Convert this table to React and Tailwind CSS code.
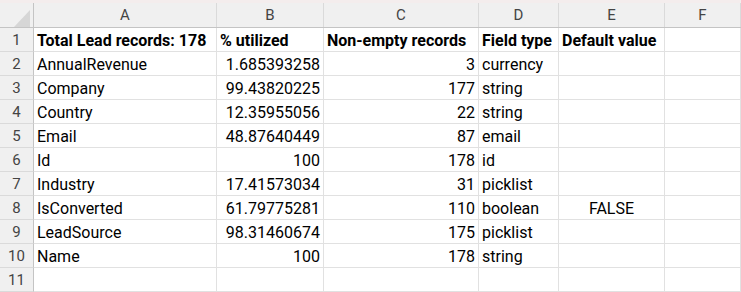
const cols = ["A", "B", "C", "D", "E", "F"]

const rows = [
  ["Total Lead records: 178", "% utilized", "Non-empty records", "Field type", "Default value", ""],
  ["AnnualRevenue", "1.685393258", "3", "currency", "", ""],
  ["Company", "99.43820225", "177", "string", "", ""],
  ["Country", "12.35955056", "22", "string", "", ""],
  ["Email", "48.87640449", "87", "email", "", ""],
  ["Id", "100", "178", "id", "", ""],
  ["Industry", "17.41573034", "31", "picklist", "", ""],
  ["IsConverted", "61.79775281", "110", "boolean", "FALSE", ""],
  ["LeadSource", "98.31460674", "175", "picklist", "", ""],
  ["Name", "100", "178", "string", "", ""],
  ["", "", "", "", "", ""],
]

const grid = "grid grid-cols-[34px_183px_107px_155px_80px_106px_1fr]"

function Cell({ value, col, header }) {
  let align = "justify-start pl-[3px]"
  if (!header && (col === 1 || col === 2)) align = "justify-end pr-[3px]"
  if (!header && value === "FALSE") align = "justify-center"
  return (
    <div
      className={`flex items-center ${align} h-[24px] pt-[2px] border-r border-b border-[#e1e1e1] whitespace-nowrap overflow-hidden ${
        header ? "font-bold" : ""
      }`}
    >
      {value}
    </div>
  )
}

export default function App() {
  return (
    <div
      className="w-[741px] h-[292px] overflow-hidden bg-white text-[16px] text-black"
      style={{ fontFamily: "Roboto, 'Liberation Sans', sans-serif" }}
    >
      <div className="h-[3px] bg-[#f4eded]" />
      {/* column headers */}
      <div className={`${grid} h-[25px] bg-[#f0f0f0] border-b border-[#c4c4c4] text-[#444] text-[15px]`}>
        <div className="relative border-r border-[#c4c4c4]">
          <svg className="absolute left-0 top-0" width="34" height="25" viewBox="0 0 34 25">
            <polygon points="30,7 30,24 14,24" fill="#d6d6d6" />
          </svg>
        </div>
        {cols.map((c) => (
          <div key={c} className="flex items-center justify-center border-r border-[#dadada]">
            {c}
          </div>
        ))}
      </div>

      {rows.map((r, i) => (
        <div key={i} className={grid}>
          <div className="flex items-center justify-center h-[24px] pt-[2px] bg-[#f0f0f0] border-r border-[#c4c4c4] border-b border-b-[#dadada] text-[#444] text-[15px]">
            {i + 1}
          </div>
          {r.map((v, j) => (
            <Cell key={j} value={v} col={j} header={i === 0} />
          ))}
        </div>
      ))}
    </div>
  )
}
